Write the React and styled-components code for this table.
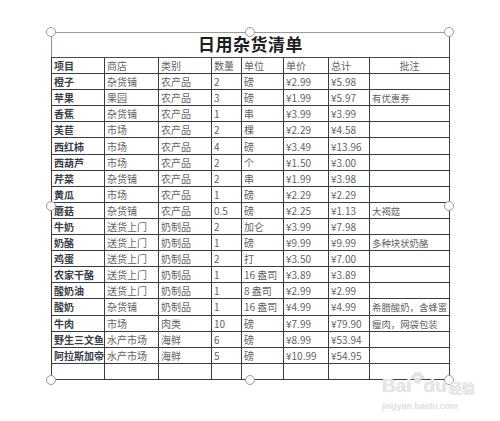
import React from "react";
import styled, { createGlobalStyle } from "styled-components";

const GlobalStyle = createGlobalStyle`
  html, body {
    margin: 0;
    padding: 0;
    background: #ffffff;
  }
`;

const Page = styled.div`
  position: relative;
  width: 500px;
  height: 421px;
  padding: 32px 0 0 51px;
  box-sizing: border-box;
  overflow: hidden;
  background: #ffffff;
  font-family: "Noto Sans CJK SC", "Noto Sans", sans-serif;
`;

const Sheet = styled.table`
  width: 398px;
  table-layout: fixed;
  border-collapse: collapse;
  border-top: 1px solid #9a9a9a;
  border-left: 1px solid #8c8c8c;
  border-right: 1px solid #4a4a4a;
  border-bottom: 1px solid #6a6a6a;
`;

const Col = styled.col`
  width: ${(p) => p.$w}px;
`;

const TitleCell = styled.td`
  height: 24px;
  padding: 0;
  text-align: center;
  font-family: "DejaVu Serif", "Noto Sans CJK SC", serif;
  font-size: 17px;
  font-weight: 700;
  color: #1e1e1e;
  line-height: 24px;
  border-bottom: 1px solid #4a4a4a;
  letter-spacing: 0.5px;
`;

const Row = styled.tr`
  height: 16.1px;
`;

const Cell = styled.td`
  height: 14.1px;
  padding: 1px 2px 0 2px;
  border: 1px solid #3c3c3c;
  font-size: ${(p) => (p.$small ? 9.4 : 10)}px;
  line-height: 14px;
  color: ${(p) => (p.$lead ? "#383e4a" : "#636363")};
  font-weight: ${(p) => (p.$lead ? 700 : 400)};
  text-align: ${(p) => (p.$center ? "center" : "left")};
  white-space: nowrap;
  overflow: hidden;
`;

const Handle = styled.div`
  position: absolute;
  left: ${(p) => p.$x - 5}px;
  top: ${(p) => p.$y - 5}px;
  width: 8px;
  height: 8px;
  border-radius: 50%;
  border: 1.2px solid #9a9a9a;
  background: #ffffff;
`;

const Watermark = styled.div`
  position: absolute;
  left: 382px;
  top: 372px;
  color: #e6e6e6;
  text-shadow: 0 0 1px #d2d2d2;
  font-family: "Liberation Sans", "Noto Sans CJK SC", sans-serif;
  pointer-events: none;
`;

const MarkLine = styled.div`
  display: flex;
  align-items: flex-end;
  gap: 2px;
  font-size: 19px;
  font-weight: 700;
  line-height: 20px;
`;

const MarkCn = styled.span`
  font-size: 13px;
  line-height: 16px;
  font-family: "Noto Sans CJK SC", sans-serif;
`;

const MarkUrl = styled.div`
  margin-top: 5px;
  font-size: 9px;
  letter-spacing: 0.2px;
`;

const Paw = () => (
  <svg width="14" height="12" viewBox="0 0 14 12" style={{ margin: "0 -2px 12px -4px" }}>
    <g fill="#e4e4e4" stroke="#d0d0d0" strokeWidth="0.5">
      <ellipse cx="3" cy="5" rx="1.6" ry="2" />
      <ellipse cx="6" cy="2.2" rx="1.6" ry="2" />
      <ellipse cx="9.5" cy="2.4" rx="1.6" ry="2" />
      <ellipse cx="12" cy="5.4" rx="1.5" ry="1.9" />
      <ellipse cx="7.5" cy="8.5" rx="3.2" ry="2.6" />
    </g>
  </svg>
);

const widths = [53, 54, 53, 30, 42, 45, 41, 80];

const header = ["项目", "商店", "类别", "数量", "单位", "单价", "总计", "批注"];

const rows = [
  ["橙子", "杂货铺", "农产品", "2", "磅", "¥2.99", "¥5.98", ""],
  ["苹果", "果园", "农产品", "3", "磅", "¥1.99", "¥5.97", "有优惠券"],
  ["香蕉", "杂货铺", "农产品", "1", "串", "¥3.99", "¥3.99", ""],
  ["芙苣", "市场", "农产品", "2", "棵", "¥2.29", "¥4.58", ""],
  ["西红柿", "市场", "农产品", "4", "磅", "¥3.49", "¥13.96", ""],
  ["西葫芦", "市场", "农产品", "2", "个", "¥1.50", "¥3.00", ""],
  ["芹菜", "杂货铺", "农产品", "2", "串", "¥1.99", "¥3.98", ""],
  ["黄瓜", "市场", "农产品", "1", "磅", "¥2.29", "¥2.29", ""],
  ["蘑菇", "杂货铺", "农产品", "0.5", "磅", "¥2.25", "¥1.13", "大褐菇"],
  ["牛奶", "送货上门", "奶制品", "2", "加仑", "¥3.99", "¥7.98", ""],
  ["奶酪", "送货上门", "奶制品", "1", "磅", "¥9.99", "¥9.99", "多种块状奶酪"],
  ["鸡蛋", "送货上门", "奶制品", "2", "打", "¥3.50", "¥7.00", ""],
  ["农家干酪", "送货上门", "奶制品", "1", "16 盎司", "¥3.89", "¥3.89", ""],
  ["酸奶油", "送货上门", "奶制品", "1", "8 盎司", "¥2.99", "¥2.99", ""],
  ["酸奶", "杂货铺", "奶制品", "1", "16 盎司", "¥4.99", "¥4.99", "希腊酸奶，含蜂蜜"],
  ["牛肉", "市场", "肉类", "10", "磅", "¥7.99", "¥79.90", "瘦肉，网袋包装"],
  ["野生三文鱼", "水产市场", "海鲜", "6", "磅", "¥8.99", "¥53.94", ""],
  ["阿拉斯加帝王蟹", "水产市场", "海鲜", "5", "磅", "¥10.99", "¥54.95", ""],
  ["", "", "", "", "", "", "", ""],
];

const handles = [
  [51, 32], [250, 32], [449, 32],
  [51, 206], [449, 206],
  [51, 380], [250, 380], [449, 380],
];

export default function App() {
  return (
    <Page>
      <GlobalStyle />
      <Sheet>
        <colgroup>
          {widths.map((w, i) => (
            <Col key={i} $w={w} />
          ))}
        </colgroup>
        <tbody>
          <tr>
            <TitleCell colSpan={8}>日用杂货清单</TitleCell>
          </tr>
          <Row>
            {header.map((h, i) => (
              <Cell key={i} $lead={i === 0} $center={i === 7}>
                {h}
              </Cell>
            ))}
          </Row>
          {rows.map((r, ri) => (
            <Row key={ri}>
              {r.map((c, ci) => (
                <Cell key={ci} $lead={ci === 0} $small={ci === 7}>
                  {c}
                </Cell>
              ))}
            </Row>
          ))}
        </tbody>
      </Sheet>
      {handles.map(([x, y], i) => (
        <Handle key={i} $x={x} $y={y} />
      ))}
      <Watermark>
        <MarkLine>
          <span>Bai</span>
          <Paw />
          <span>du</span>
          <MarkCn>经验</MarkCn>
        </MarkLine>
        <MarkUrl>jingyan.baidu.com</MarkUrl>
      </Watermark>
    </Page>
  );
}
